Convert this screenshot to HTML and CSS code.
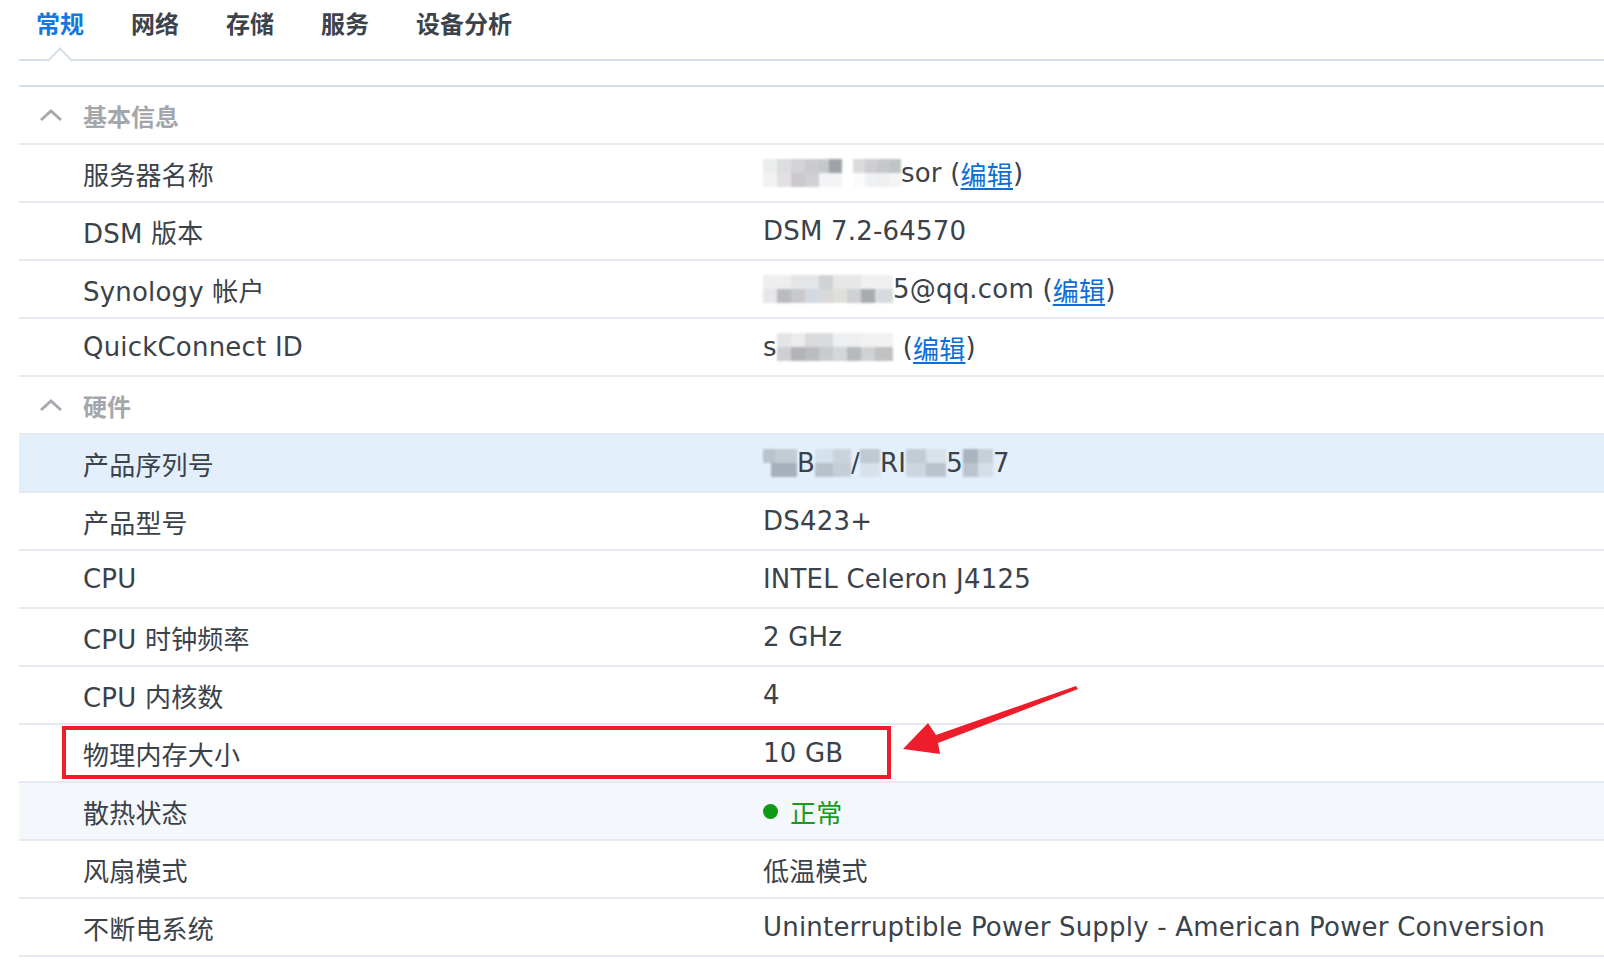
FILE: index.html
```html
<!DOCTYPE html>
<html>
<head>
	<title>信息中心</title>
	<meta name="viewport" content="width=device-width">
	<link rel="stylesheet" href="styles.css">
</head>
<body>
	<div class="tabs">
		<span class="tab active">常规</span>
		<span class="tab">网络</span>
		<span class="tab">存储</span>
		<span class="tab">服务</span>
		<span class="tab">设备分析</span>
	</div>

	<div class="panel">
		<div class="section-head">
			<svg class="chevron" width="24" height="14" viewBox="0 0 24 14"><path d="M2 12 L12 3 L22 12" fill="none" stroke="#a6aaae" stroke-width="3"/></svg>
			<span>基本信息</span>
		</div>
		<div class="row">
			<div class="label">服务器名称</div>
			<div class="value"><span class="mosaic m-name1"></span><span class="mosaic m-name2"></span>sor (<a href="#">编辑</a>)</div>
		</div>
		<div class="row">
			<div class="label">DSM 版本</div>
			<div class="value">DSM 7.2-64570</div>
		</div>
		<div class="row">
			<div class="label">Synology 帐户</div>
			<div class="value"><span class="mosaic m-mail"></span>5@qq.com (<a href="#">编辑</a>)</div>
		</div>
		<div class="row">
			<div class="label">QuickConnect ID</div>
			<div class="value">s<span class="mosaic m-qc"></span>(<a href="#">编辑</a>)</div>
		</div>

		<div class="section-head">
			<svg class="chevron" width="24" height="14" viewBox="0 0 24 14"><path d="M2 12 L12 3 L22 12" fill="none" stroke="#a6aaae" stroke-width="3"/></svg>
			<span>硬件</span>
		</div>
		<div class="row selected">
			<div class="label">产品序列号</div>
			<div class="value serial"><span class="mosaic m-s1"></span>B<span class="mosaic m-s2"></span>/<span class="mosaic m-s3"></span>RI<span class="mosaic m-s4"></span>5<span class="mosaic m-s5"></span>7</div>
		</div>
		<div class="row">
			<div class="label">产品型号</div>
			<div class="value">DS423+</div>
		</div>
		<div class="row">
			<div class="label">CPU</div>
			<div class="value">INTEL Celeron J4125</div>
		</div>
		<div class="row">
			<div class="label">CPU 时钟频率</div>
			<div class="value">2 GHz</div>
		</div>
		<div class="row">
			<div class="label">CPU 内核数</div>
			<div class="value">4</div>
		</div>
		<div class="row marked">
			<div class="label">物理内存大小</div>
			<div class="value">10 GB</div>
			<div class="red-box"></div>
		</div>
		<div class="row hover">
			<div class="label">散热状态</div>
			<div class="value ok"><span class="dot"></span>正常</div>
		</div>
		<div class="row">
			<div class="label">风扇模式</div>
			<div class="value">低温模式</div>
		</div>
		<div class="row">
			<div class="label">不断电系统</div>
			<div class="value">Uninterruptible Power Supply - American Power Conversion</div>
		</div>
	</div>

	<svg class="arrow" width="1604" height="976" viewBox="0 0 1604 976">
		<polygon points="1076,686 936,735 928,723 903,749 940,754 938,743 1078,689" fill="#ee1d2b"/>
	</svg>
</body>
</html>
```

FILE: styles.css
```css
/* base */
body {
	margin: 0;
	background-color: #fff;
	color: #3b424a;
	font-family: "DejaVu Sans", "Noto Sans CJK SC", sans-serif;
	font-size: 26px;
	letter-spacing: 0.2px;
	position: relative;
	height: 976px;
	overflow: hidden;
}

/* tabs on top */
.tabs {
	display: flex;
	gap: 47px;
	margin-left: 19px;
	padding-left: 17px;
	height: 59px;
	border-bottom: 2px solid #d5dfe8;
	font-family: "Noto Sans CJK SC", sans-serif;
	font-size: 24px;
	font-weight: bold;
	letter-spacing: 0;
}

.tab {
	position: relative;
	padding-top: 8px;
	line-height: 30px;
	color: #3c434b;
}

.tab.active {
	color: #1477e0;
}

/* little notch under the active tab */
.tab.active::after {
	content: "";
	position: absolute;
	left: 50%;
	bottom: -10px;
	width: 16px;
	height: 16px;
	margin-left: -9px;
	background: #fff;
	border-top: 2px solid #d5dfe8;
	border-left: 2px solid #d5dfe8;
	transform: rotate(45deg);
}

.panel {
	margin: 24px 0 0 19px;
	border-top: 2px solid #d5dfe8;
}

.section-head {
	display: flex;
	align-items: center;
	height: 56px;
	border-bottom: 2px solid #e4eaf0;
	color: #a3a7ab;
	font-family: "Noto Sans CJK SC", sans-serif;
	font-size: 24px;
	font-weight: bold;
	letter-spacing: 0;
}

.chevron {
	margin: 0 20px 0 20px;
}

.row {
	display: grid;
	grid-template-columns: 744px 1fr;
	align-items: center;
	height: 56px;
	border-bottom: 2px solid #e4eaf0;
	position: relative;
}

.row.selected {
	background-color: #e3effb;
}

.row.hover {
	background-color: #f4f8fc;
}

.label {
	padding-left: 64px;
	white-space: nowrap;
}

.value {
	display: flex;
	align-items: center;
	white-space: nowrap;
}

.value a {
	color: #0b6fd6;
	text-decoration: underline;
	text-underline-offset: 3px;
}

.value.ok {
	color: #1a9a1a;
}

.dot {
	width: 15px;
	height: 15px;
	border-radius: 50%;
	background-color: #0e9a14;
	margin-right: 12px;
}

/* blurred private data */
.mosaic {
	display: inline-block;
	height: 28px;
	filter: blur(1px);
	background-repeat: no-repeat;
	background-size: 100% 50%;
	background-position: top, bottom;
}

.m-name1 {
	width: 79px;
	margin-right: 11px;
	background-image:
		linear-gradient(90deg, #eceded 0 14px, #dcdde0 14px 28px, #d4d3d6 28px 42px, #c9cbcd 42px 56px, #c4c8c9 56px 66px, #9fa2a6 66px 79px),
		linear-gradient(90deg, #f2f2f3 0 14px, #e1e1e3 14px 28px, #cdc8cc 28px 42px, #d0cfd2 42px 56px, #f3f4f5 56px 79px);
}

.m-name2 {
	width: 48px;
	background-image:
		linear-gradient(90deg, #d9dbdd 0 12px, #cfcdd0 12px 24px, #c6c8cc 24px 36px, #bfc4c8 36px 48px),
		linear-gradient(90deg, #fafbfc 0 12px, #f0f1f2 12px 24px, #eeeff1 24px 36px, #f4f4f5 36px 48px);
}

.m-mail {
	width: 130px;
	background-image:
		linear-gradient(90deg, #eeeeef 0 28px, #e4e5e6 28px 56px, #d0d2d4 56px 70px, #e6e7e8 70px 98px, #f0f0f1 98px 130px),
		linear-gradient(90deg, #e6e7e8 0 14px, #b9bbbf 14px 28px, #c8c9cb 28px 42px, #d3d9e1 42px 56px, #d9d9db 56px 70px, #e1dfdc 70px 84px, #cfd0d2 84px 98px, #a9abaf 98px 112px, #d7dbdf 112px 130px);
}

.m-qc {
	width: 116px;
	margin-right: 10px;
	background-image:
		linear-gradient(90deg, #e3e4e5 0 14px, #ececed 14px 28px, #d9dadc 28px 56px, #eeeff0 56px 84px, #f2f2f3 84px 116px),
		linear-gradient(90deg, #cfcfd1 0 14px, #b3b4b7 14px 28px, #bbbcbe 28px 42px, #c9cacc 42px 56px, #d5d6d7 56px 70px, #b8b9bb 70px 84px, #d0d1d3 84px 98px, #c0c1c3 98px 116px);
}

.m-s1 {
	width: 34px;
	background-image:
		linear-gradient(90deg, #b9c3cc 0 12px, #c3ccd4 12px 34px),
		linear-gradient(90deg, #e3eef9 0 8px, #a6b0ba 8px 34px);
}

.m-s2 {
	width: 36px;
	background-image:
		linear-gradient(90deg, #d5e1ec 0 18px, #c9d3dc 18px 36px),
		linear-gradient(90deg, #b7c1ca 0 18px, #c5ced7 18px 36px);
}

.m-s3 {
	width: 20px;
	background-image:
		linear-gradient(90deg, #bfc9d2 0 20px),
		linear-gradient(90deg, #d7e1ea 0 20px);
}

.m-s4 {
	width: 40px;
	background-image:
		linear-gradient(90deg, #c2ccd5 0 20px, #d8e2eb 20px 40px),
		linear-gradient(90deg, #cdd6de 0 20px, #b9c3cc 20px 40px);
}

.m-s5 {
	width: 30px;
	background-image:
		linear-gradient(90deg, #aab4be 0 15px, #c6d0d9 15px 30px),
		linear-gradient(90deg, #bac4cd 0 15px, #d4dee7 15px 30px);
}

/* annotation */
.red-box {
	position: absolute;
	left: 43px;
	top: 1px;
	width: 821px;
	height: 45px;
	border: 4px solid #ee1d2b;
}

.arrow {
	position: absolute;
	left: 0;
	top: 0;
	pointer-events: none;
}
```
